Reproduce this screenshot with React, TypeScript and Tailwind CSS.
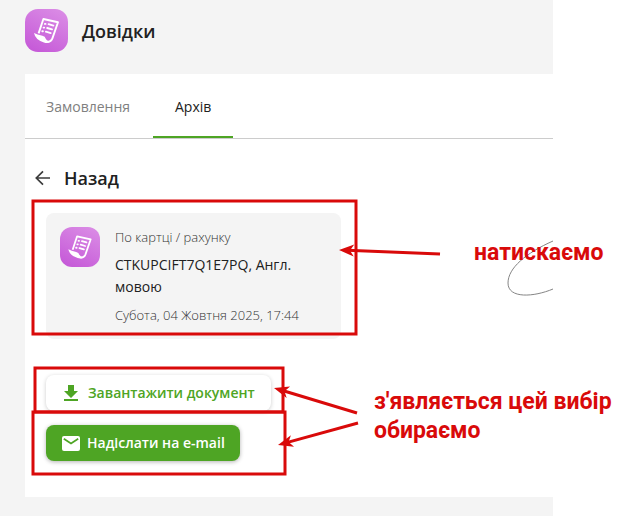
import { useState } from "react";

const ARROW_HEAD = "M0 0 L15 -6 L11 0 L15 6 Z";

function DocumentIcon({ id, className }: { id: string; className: string }) {
  return (
    <svg viewBox="0 0 43 43" className={className} aria-hidden="true">
      <defs>
        <linearGradient id={id} x1="0.8" y1="0" x2="0.3" y2="1">
          <stop offset="0" stopColor="#da8be5" />
          <stop offset="1" stopColor="#c65bd8" />
        </linearGradient>
      </defs>
      <rect width="43" height="43" rx="13" fill={`url(#${id})`} />
      <path
        d="M13.6 24.4 L18.4 10 L33 13.2 L27.4 29.4 Q25.8 33.4 22 32.8"
        fill="none"
        stroke="#fff"
        strokeWidth="1.9"
        strokeLinejoin="round"
      />
      <path d="M9 24 Q12 25.6 17.4 26.8 Q20.4 27.6 20.6 29.6 Q21.6 32 25.4 32.4 Q23 34.8 19 33.4 Q10.4 31 9 24 Z" fill="#fff" />
      <path
        d="M19.9 14.9h.6M23.6 15.2l4.8 1.4M18.6 18.6h.6M22.2 19l4.8 1.4M17.3 22.3h.6M20.9 22.7l4.8 1.4"
        stroke="#fff"
        strokeWidth="1.9"
        strokeLinecap="round"
      />
    </svg>
  );
}

function Arrow({ from, to }: { from: [number, number]; to: [number, number] }) {
  const angle = (Math.atan2(from[1] - to[1], from[0] - to[0]) * 180) / Math.PI;
  return (
    <g transform={`translate(${to[0]} ${to[1]}) rotate(${angle})`}>
      <path d={`M8 0H${Math.hypot(from[0] - to[0], from[1] - to[1])}`} stroke="#d90a0a" strokeWidth="3" />
      <path d={ARROW_HEAD} fill="#d90a0a" />
    </g>
  );
}

function Annotations() {
  return (
    <div className="pointer-events-none absolute top-0 left-0 font-['Roboto',sans-serif] text-[23px] leading-[29px] font-bold text-[#d90a0a]">
      <svg width="619" height="516" fill="none" aria-hidden="true">
        <path d="M553 241 C526 253 508 268 508 283 C508 299 534 297 553 289" stroke="#858585" />
        <g stroke="#d90a0a" strokeWidth="3">
          <rect x="33" y="201" width="323" height="133" />
          <rect x="35" y="368" width="248" height="44" />
          <rect x="33" y="412" width="252" height="62" />
        </g>
        <Arrow from={[440, 254]} to={[339, 250]} />
        <Arrow from={[357, 413]} to={[274, 388]} />
        <Arrow from={[358, 423]} to={[278, 445]} />
      </svg>
      <p className="absolute top-[238px] left-[474px] whitespace-nowrap">натискаємо</p>
      <p className="absolute top-[387px] left-[374px] whitespace-nowrap">
        з'являється цей вибір
        <br />
        обираємо
      </p>
    </div>
  );
}

const TABS = [
  { id: "orders", label: "Замовлення" },
  { id: "archive", label: "Архів" },
];

export default function App() {
  const [activeTab, setActiveTab] = useState("archive");

  return (
    <div className="relative min-h-screen overflow-hidden bg-white pr-[66px] font-['Open_Sans','Noto_Sans',sans-serif] text-[#212121]">
      <div className="min-h-screen bg-[#f4f4f4] pt-[9px] pb-[19px] pl-[25px]">
        <header className="flex items-center gap-3.5">
          <DocumentIcon id="header-icon" className="size-[43px]" />
          <h1 className="text-lg leading-[26px] font-semibold">Довідки</h1>
        </header>

        <main className="mt-[22px] bg-white pb-9">
          <nav className="flex h-[65px] gap-0.5 border-b border-[#cccccc]">
            {TABS.map((tab) => (
              <button
                key={tab.id}
                onClick={() => setActiveTab(tab.id)}
                className={
                  tab.id === activeTab
                    ? "border-b-2 border-[#4ea524] px-[22px] pt-1 text-sm"
                    : "border-b-2 border-transparent px-[21px] pt-1 text-sm text-[#808080]"
                }
              >
                {tab.label}
              </button>
            ))}
          </nav>

          <button className="mt-[25px] ml-2 flex items-center gap-[11px] text-lg font-semibold">
            <svg viewBox="0 0 20 20" className="size-5" fill="none" stroke="#3c3c3c" strokeWidth="1.7" aria-hidden="true">
              <path d="M17 10H3.5M10 3.3L3.3 10l6.7 6.7" />
            </svg>
            Назад
          </button>

          <div className="px-[21px] pt-[21px]">
            <button className="flex w-full max-w-[295px] items-start gap-[15px] rounded-lg bg-[#f4f4f4] p-3.5 text-left">
              <DocumentIcon id="card-icon" className="size-10 shrink-0" />
              <span className="flex flex-col">
                <span className="text-[13px] leading-5 font-light text-[#333333]">По картці / рахунку</span>
                <span className="mt-[7px] text-sm leading-[22px]">CTKUPCIFT7Q1E7PQ, Англ. мовою</span>
                <span className="mt-[7px] text-[13px] leading-5 font-light text-[#333333]">
                  Субота, 04 Жовтня 2025, 17:44
                </span>
              </span>
            </button>

            <div className="mt-9 flex flex-col items-start gap-3.5 text-sm font-semibold">
              <button className="flex h-9 items-center gap-1.5 rounded-lg bg-white px-4 text-[#4ea524] shadow-[0_1px_4px_rgba(0,0,0,0.2)]">
                <svg viewBox="0 0 20 20" className="size-5" fill="currentColor" aria-hidden="true">
                  <path d="M6 2h6v6h4l-7 7-7-7h4zM2 16h14v2H2z" />
                </svg>
                Завантажити документ
              </button>
              <button className="flex h-9 items-center gap-1.5 rounded-lg bg-[#4ea524] px-[15px] text-white shadow-[0_1px_4px_rgba(0,0,0,0.3)]">
                <svg viewBox="0 0 20 20" className="size-5" aria-hidden="true">
                  <rect x="1" y="3" width="18" height="15" rx="2" fill="#fff" />
                  <path d="M2.8 5.8L10 10.4l7.2-4.6" fill="none" stroke="#4ea524" strokeWidth="1.8" />
                </svg>
                Надіслати на e-mail
              </button>
            </div>
          </div>
        </main>
      </div>
      <Annotations />
    </div>
  );
}
